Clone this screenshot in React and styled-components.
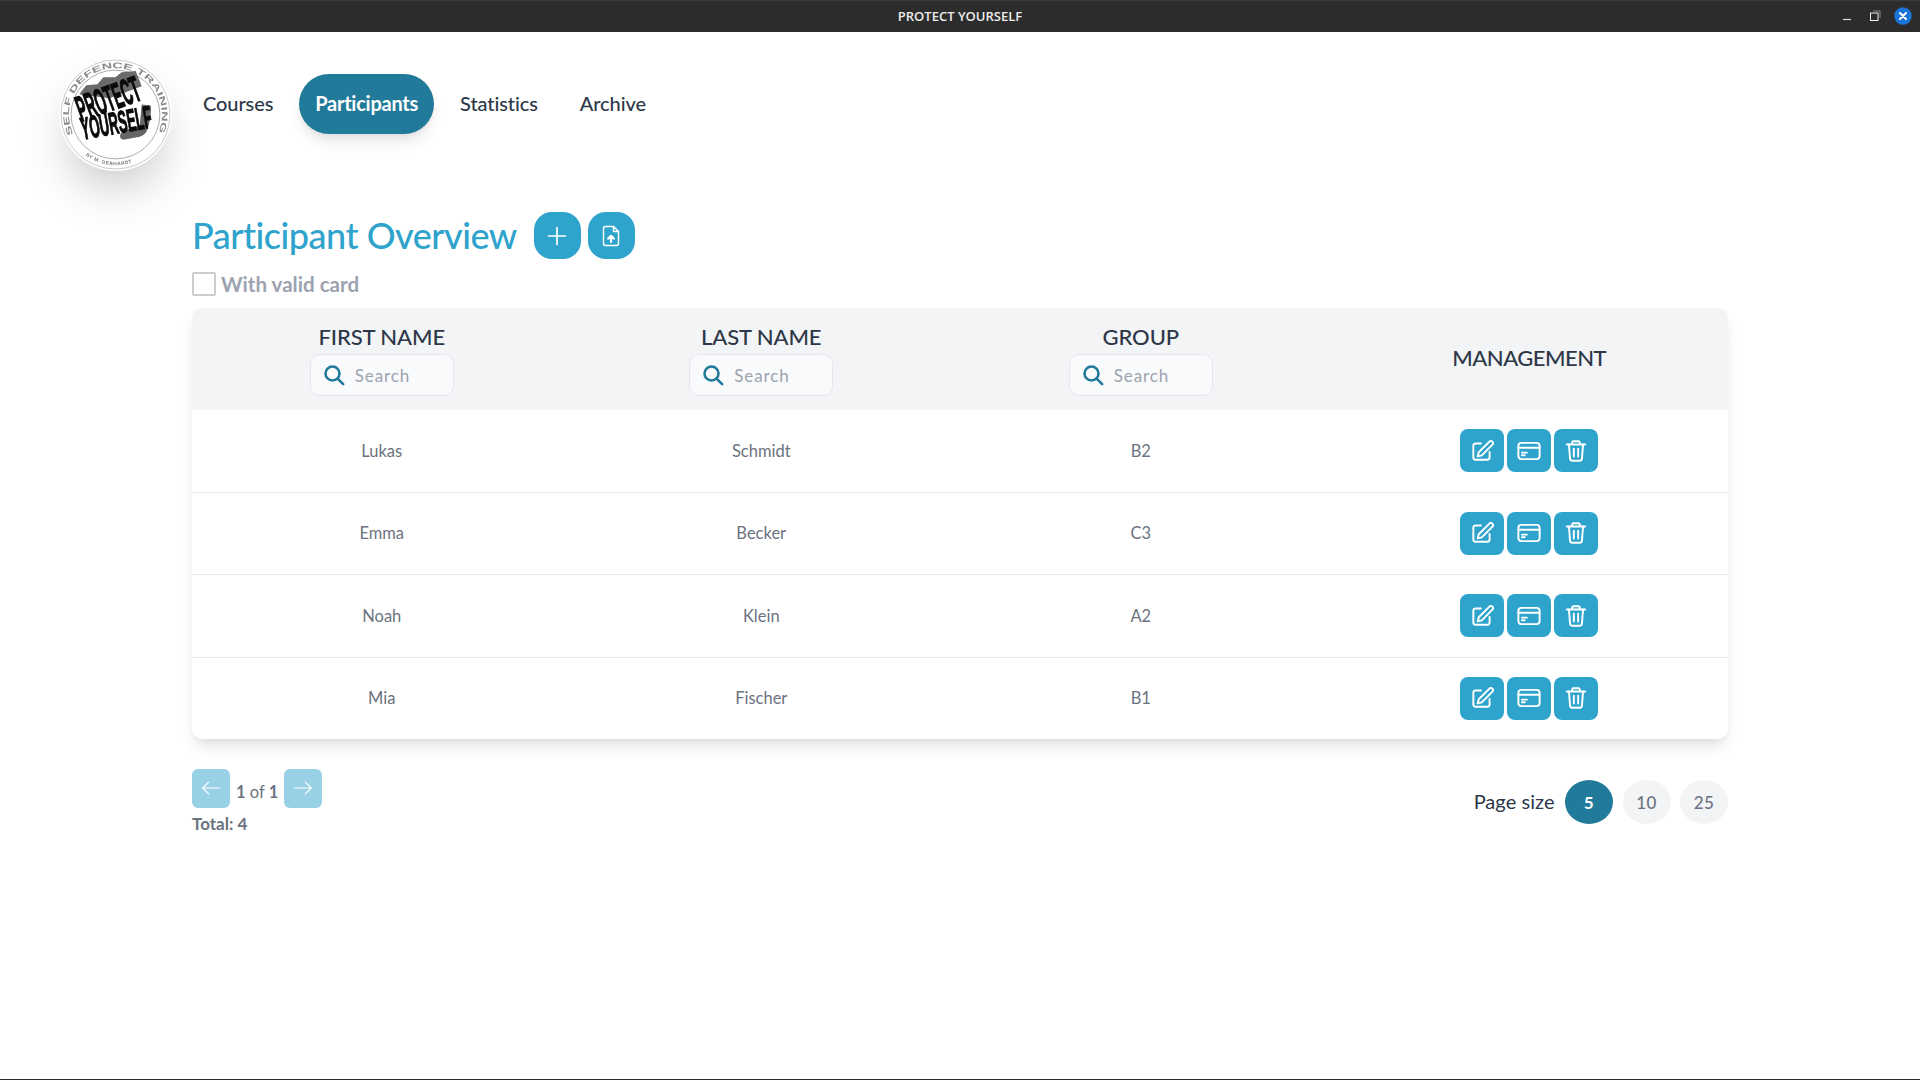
import React from "react";
import styled, { createGlobalStyle } from "styled-components";

const Global = createGlobalStyle`
  html, body { margin: 0; padding: 0; background: #fff; }
  body { font-family: "Lato", "Open Sans", sans-serif; }
  * { box-sizing: border-box; }
`;

const Windowed = styled.div`
  height: 1080px;
  display: flex;
  flex-direction: column;
  border-bottom: 1px solid #2c2c2c;
  overflow: hidden;
`;
const TitleBar = styled.header`
  height: 32px;
  flex: none;
  padding-bottom: 1px;
  background: #2c2c2c;
  border-top: 1px solid #3a3a3a;
  color: #ececec;
  display: flex;
  align-items: center;
  justify-content: center;
  position: relative;
  font: 600 13px "Open Sans", sans-serif;
`;
const WindowControls = styled.div`
  position: absolute;
  right: 8px;
  top: 6px;
  display: flex;
  align-items: center;
  gap: 11px;
`;
const Header = styled.div`
  display: flex;
  align-items: flex-start;
  padding: 26px 0 0 59px;
  height: 139px;
  flex: none;
`;
const LogoDisc = styled.div`
  width: 113px;
  height: 113px;
  border-radius: 50%;
  background: #fff;
  box-shadow: 0 25px 50px -12px rgba(0, 0, 0, 0.25);
  flex: none;
`;
const Nav = styled.nav`
  display: flex;
  gap: 10px;
  margin: 16px 0 0 15px;
`;
const NavItem = styled.a`
  height: 60px;
  padding: 0 16px 2px;
  display: flex;
  align-items: center;
  border-radius: 30px;
  font-size: 20px;
  letter-spacing: ${(p) => (p.$active ? "-0.25px" : "-0.1px")};
  font-weight: ${(p) => (p.$active ? 700 : 500)};
  color: ${(p) => (p.$active ? "#fff" : "#2d3748")};
  background: ${(p) => (p.$active ? "#227a9a" : "transparent")};
  box-shadow: ${(p) =>
    p.$active ? "0 10px 15px -3px rgba(0,0,0,.1), 0 4px 6px -2px rgba(0,0,0,.05)" : "none"};
`;
const Content = styled.main`
  padding: 41px 192px 0;
  flex: 1;
`;
const TitleRow = styled.div`
  display: flex;
  align-items: center;
  height: 47px;
`;
const Title = styled.h1`
  margin: 0 17px 0 0;
  padding-bottom: 1px;
  font-size: 36px;
  font-weight: 500;
  letter-spacing: -0.48px;
  color: #2ea3cc;
  white-space: nowrap;
`;
const RoundButton = styled.button`
  width: 47px;
  height: 47px;
  border: 0;
  padding: 0;
  margin-right: 7px;
  border-radius: 18px;
  background: #2ea3cc;
  display: flex;
  align-items: center;
  justify-content: center;
`;
const FilterRow = styled.label`
  display: flex;
  align-items: center;
  gap: 5px;
  margin-top: 13px;
  height: 24px;
  font-size: 20.6px;
  font-weight: 700;
  line-height: 23px;
  color: #9ca3af;
`;
const CheckBox = styled.span`
  width: 24px;
  height: 24px;
  border: 2px solid #ccc;
  border-radius: 2px;
  background: #fff;
  flex: none;
`;
const Table = styled.section`
  margin-top: 12px;
  border-radius: 10px;
  background: #fff;
  box-shadow: 0 10px 15px -3px rgba(0, 0, 0, 0.1), 0 4px 6px -2px rgba(0, 0, 0, 0.05);
  overflow: hidden;
`;
const columns = "379.5px 379.5px 379.5px 1fr";
const HeadRow = styled.div`
  display: grid;
  grid-template-columns: ${columns};
  height: 102px;
  background: #f3f4f6;
`;
const HeadCell = styled.div`
  display: flex;
  flex-direction: column;
  align-items: center;
  justify-content: center;
  gap: 4px;
  font-size: 22px;
  font-weight: 500;
  color: #2d3748;
  line-height: 27px;
  padding: ${(p) => (p.$solo ? "0 0 3px" : "1px 0 0")};
  letter-spacing: ${(p) => (p.$solo ? "-0.5px" : "-0.1px")};
`;
const SearchBox = styled.div`
  width: 144px;
  height: 42px;
  border: 1px solid #e5e7eb;
  border-radius: 10px;
  background: #f9fafb;
  display: flex;
  align-items: center;
  gap: 9px;
  padding-left: 11px;
  font-size: 17px;
  font-weight: 400;
  letter-spacing: 0.9px;
  color: #9ca3af;
`;
const BodyRow = styled.div`
  display: grid;
  grid-template-columns: ${columns};
  height: 82.6px;
  border-bottom: 1px solid #e5e7eb;
  &:last-child { border-bottom: 0; height: 81px; }
`;
const TextCell = styled.div`
  display: flex;
  align-items: center;
  justify-content: center;
  font-size: 16.5px;
  color: #6b7280;
`;
const ActionCell = styled.div`
  display: flex;
  align-items: center;
  justify-content: center;
  gap: 3px;
`;
const ActionButton = styled.button`
  width: 44px;
  height: 43px;
  padding: 0;
  border: 0;
  border-radius: 8px;
  background: #2ea3cc;
  display: flex;
  align-items: center;
  justify-content: center;
`;
const Footer = styled.div`
  margin-top: 30px;
  display: flex;
  align-items: center;
  justify-content: space-between;
`;
const PagerColumn = styled.div`
  display: flex;
  flex-direction: column;
  gap: 4px;
`;
const Pager = styled.div`
  display: flex;
  align-items: center;
  gap: 6px;
`;
const ArrowButton = styled.button`
  width: 38px;
  height: 39px;
  padding: 0;
  border: 0;
  border-radius: 6px;
  background: #98d1e5;
  display: flex;
  align-items: center;
  justify-content: center;
`;
const PageText = styled.span`
  font-size: 16.5px;
  color: #6b7280;
  padding-top: 7px;
  b { font-weight: 700; }
`;
const Total = styled.div`
  font-size: 17px;
  font-weight: 700;
  line-height: 24px;
  color: #6b7280;
`;
const PageSizes = styled.div`
  display: flex;
  align-items: center;
  gap: 9.5px;
  font-size: 20px;
  color: #2d3748;
`;
const SizeLabel = styled.span`
  margin-right: 1px;
  padding-bottom: 2px;
  letter-spacing: 0.05px;
`;
const SizePill = styled.button`
  width: 48px;
  height: 44px;
  border: 0;
  padding: 0;
  border-radius: 50%;
  font: ${(p) => (p.$active ? 700 : 500)} 17px "Lato", sans-serif;
  letter-spacing: 0.5px;
  color: ${(p) => (p.$active ? "#fff" : "#6b7280")};
  background: ${(p) => (p.$active ? "#227a9a" : "#f3f4f6")};
`;

const Icon = ({ size = 24, color = "#fff", sw = 1.8, children }) => (
  <svg width={size} height={size} viewBox="0 0 24 24" fill="none" stroke={color} strokeWidth={sw} strokeLinecap="round" strokeLinejoin="round">
    {children}
  </svg>
);
const EditIcon = () => (
  <Icon size={26}>
    <path d="M11 5H6a2 2 0 0 0-2 2v11a2 2 0 0 0 2 2h11a2 2 0 0 0 2-2v-5" />
    <path d="M18.6 3.6a2 2 0 1 1 2.8 2.8L11.8 16 8 17l1-3.8z" />
  </Icon>
);
const CardIcon = () => (
  <Icon size={26}>
    <rect x="2.2" y="4.5" width="19.6" height="15" rx="2.8" />
    <path d="M2.2 9h19.6M5.5 13.5h4.5M5.5 16h2.5" />
  </Icon>
);
const TrashIcon = () => (
  <Icon size={26}>
    <path d="M3.5 6h17M8.5 6V4.2A1.2 1.2 0 0 1 9.7 3h4.6a1.2 1.2 0 0 1 1.2 1.2V6" />
    <path d="M5.5 6l1 13a2.2 2.2 0 0 0 2.2 2h6.6a2.2 2.2 0 0 0 2.2-2l1-13M10 10v7M14 10v7" />
  </Icon>
);
const PlusIcon = () => (
  <Icon size={24} sw={1.7}>
    <path d="M12 3.5v17M3.5 12h17" />
  </Icon>
);
const FileUpIcon = () => (
  <Icon size={24} sw={1.5}>
    <path d="M6.5 2.5h8l5 5v12a2 2 0 0 1-2 2h-11a2 2 0 0 1-2-2v-15a2 2 0 0 1 2-2z" />
    <path d="M14.5 2.5v5h5" />
    <path d="M12 18v-5.5M9.2 14.6L12 11.8l2.8 2.8" strokeWidth="2.2" />
  </Icon>
);
const SearchIcon = () => (
  <Icon size={24} color="#227a9a" sw={2.6}>
    <circle cx="10.5" cy="10.5" r="7" />
    <path d="M15.8 15.8l5.4 5.4" />
  </Icon>
);
const ArrowLeft = () => (
  <Icon size={22} sw={1.2}>
    <path d="M21 12H3M9.5 5.5L3 12l6.5 6.5" />
  </Icon>
);
const ArrowRight = () => (
  <Icon size={22} sw={1.2}>
    <path d="M3 12h18M14.5 5.5L21 12l-6.5 6.5" />
  </Icon>
);

const Logo = () => (
  <svg width="113" height="113" viewBox="0 0 112 112" style={{ display: "block", filter: "blur(0.3px)" }}>
    <defs>
      <path id="ringTop" d="M14.3 75.4 A 46 46 0 1 1 97.7 75.4" />
      <path id="ringBottom" d="M21 92 A 50 50 0 0 0 91 92" />
    </defs>
    <circle cx="56" cy="56" r="54" fill="none" stroke="#c4c4c4" strokeWidth="0.9" />
    <circle cx="56" cy="56" r="44" fill="none" stroke="#8a8a8a" strokeWidth="0.7" />
    <text fontFamily="Liberation Sans" fontWeight="700" fontSize="8.2" fill="#8a8a8a">
      <textPath href="#ringTop" textLength="182" lengthAdjust="spacingAndGlyphs">SELF DEFENCE TRAINING</textPath>
    </text>
    <text fontFamily="Liberation Sans" fontWeight="700" fontSize="4.8" fill="#777" letterSpacing="0.5">
      <textPath href="#ringBottom" startOffset="9%">BY M. GERHARDT</textPath>
    </text>
    <path d="M20 36 L27 27 L38 26 L44 19 L56 19 L62 14 L76 13 L82 28 L50 40 Z" fill="#6a6a6a" />
    <path d="M82 46 L91 47 Q92 56 88 70 Q86 76 80 78 L64 81 Q59 80 61 75 L66 71 L80 68 Z" fill="#666" />
    <g fontFamily="Liberation Sans" fontWeight="700" fill="#0a0a0a" stroke="#0a0a0a">
      <text x="-32" y="13" fontSize="36" textLength="65" lengthAdjust="spacingAndGlyphs" strokeWidth="1.3" transform="translate(48 40) rotate(-20)">PROTECT</text>
      <text x="-35" y="11" fontSize="31" textLength="71" lengthAdjust="spacingAndGlyphs" strokeWidth="1.1" transform="translate(56 64) rotate(-10)">YOURSELF</text>
    </g>
  </svg>
);

const WindowButtons = () => (
  <WindowControls>
    <svg width="18" height="12" viewBox="0 0 18 12"><path d="M5 9.5h8" stroke="#ddd" strokeWidth="1.2" /></svg>
    <svg width="16" height="12" viewBox="0 0 16 12" fill="none">
      <path d="M6 1h7v7" stroke="#888" strokeWidth="1" />
      <rect x="3.5" y="3" width="7.5" height="7.5" stroke="#eee" strokeWidth="1" />
    </svg>
    <svg width="18" height="18" viewBox="0 0 18 18">
      <circle cx="9" cy="9" r="8.7" fill="#1b74d8" />
      <path d="M6 6l6 6M12 6l-6 6" stroke="#fff" strokeWidth="2" strokeLinecap="round" />
    </svg>
  </WindowControls>
);

const participants = [
  ["Lukas", "Schmidt", "B2"],
  ["Emma", "Becker", "C3"],
  ["Noah", "Klein", "A2"],
  ["Mia", "Fischer", "B1"],
];

const SearchHead = ({ label }) => (
  <HeadCell>
    {label}
    <SearchBox>
      <SearchIcon />
      Search
    </SearchBox>
  </HeadCell>
);

export default function App() {
  return (
    <Windowed>
      <Global />
      <TitleBar>
        PROTECT YOURSELF
        <WindowButtons />
      </TitleBar>
      <Header>
        <LogoDisc><Logo /></LogoDisc>
        <Nav>
          <NavItem>Courses</NavItem>
          <NavItem $active>Participants</NavItem>
          <NavItem>Statistics</NavItem>
          <NavItem>Archive</NavItem>
        </Nav>
      </Header>
      <Content>
        <TitleRow>
          <Title>Participant Overview</Title>
          <RoundButton><PlusIcon /></RoundButton>
          <RoundButton><FileUpIcon /></RoundButton>
        </TitleRow>
        <FilterRow>
          <CheckBox />
          With valid card
        </FilterRow>
        <Table>
          <HeadRow>
            <SearchHead label="FIRST NAME" />
            <SearchHead label="LAST NAME" />
            <SearchHead label="GROUP" />
            <HeadCell $solo>MANAGEMENT</HeadCell>
          </HeadRow>
          {participants.map(([first, last, group]) => (
            <BodyRow key={first}>
              <TextCell>{first}</TextCell>
              <TextCell>{last}</TextCell>
              <TextCell>{group}</TextCell>
              <ActionCell>
                <ActionButton><EditIcon /></ActionButton>
                <ActionButton><CardIcon /></ActionButton>
                <ActionButton><TrashIcon /></ActionButton>
              </ActionCell>
            </BodyRow>
          ))}
        </Table>
        <Footer>
          <PagerColumn>
            <Pager>
              <ArrowButton><ArrowLeft /></ArrowButton>
              <PageText><b>1</b> of <b>1</b></PageText>
              <ArrowButton><ArrowRight /></ArrowButton>
            </Pager>
            <Total>Total: 4</Total>
          </PagerColumn>
          <PageSizes>
            <SizeLabel>Page size</SizeLabel>
            <SizePill $active>5</SizePill>
            <SizePill>10</SizePill>
            <SizePill>25</SizePill>
          </PageSizes>
        </Footer>
      </Content>
    </Windowed>
  );
}
